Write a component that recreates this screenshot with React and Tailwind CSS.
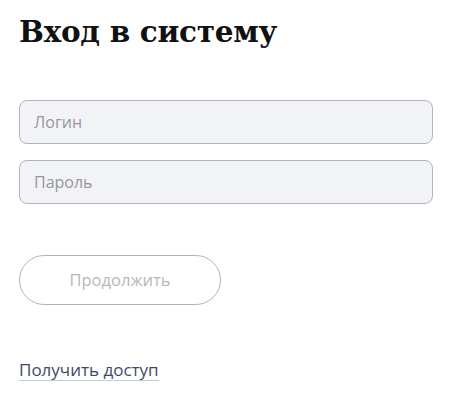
import React from 'react';

const App = () => {
    return (
        <div className="min-h-screen bg-white px-[19px] pt-[10px]">
            {/* Title */}
            <h1 className="text-[29.5px] leading-[44px] font-bold text-[#111] font-['DejaVu_Serif',serif] tracking-[-0.3px]">
                Вход в систему
            </h1>

            {/* Fields */}
            <div className="mt-[46px] flex flex-col gap-4 w-[414px]">
                <input
                    type="text"
                    placeholder="Логин"
                    className="h-[44px] w-full rounded-lg border border-[#b3b3ba] bg-[#f2f3f7] px-[14px] text-base text-[#333] placeholder:text-[#96969c] font-['Open_Sans',sans-serif] outline-none"
                />
                <input
                    type="password"
                    placeholder="Пароль"
                    className="h-[44px] w-full rounded-lg border border-[#b3b3ba] bg-[#f2f3f7] px-[14px] text-base text-[#333] placeholder:text-[#96969c] font-['Open_Sans',sans-serif] outline-none"
                />
            </div>

            {/* Submit */}
            <button
                disabled
                className="mt-[51px] h-[50px] w-[202px] rounded-full border border-[#b3b3b3] bg-white text-[16.5px] text-[#b8b8b8] font-['Open_Sans',sans-serif]"
            >
                Продолжить
            </button>

            {/* Access link */}
            <div className="mt-[53px]">
                <a
                    href="#"
                    className="inline-block text-[17px] leading-[20px] text-[#3d4a68] font-['Open_Sans',sans-serif] border-b border-[#c5cbd8]"
                >
                    Получить доступ
                </a>
            </div>
        </div>
    );
};

export default App;
